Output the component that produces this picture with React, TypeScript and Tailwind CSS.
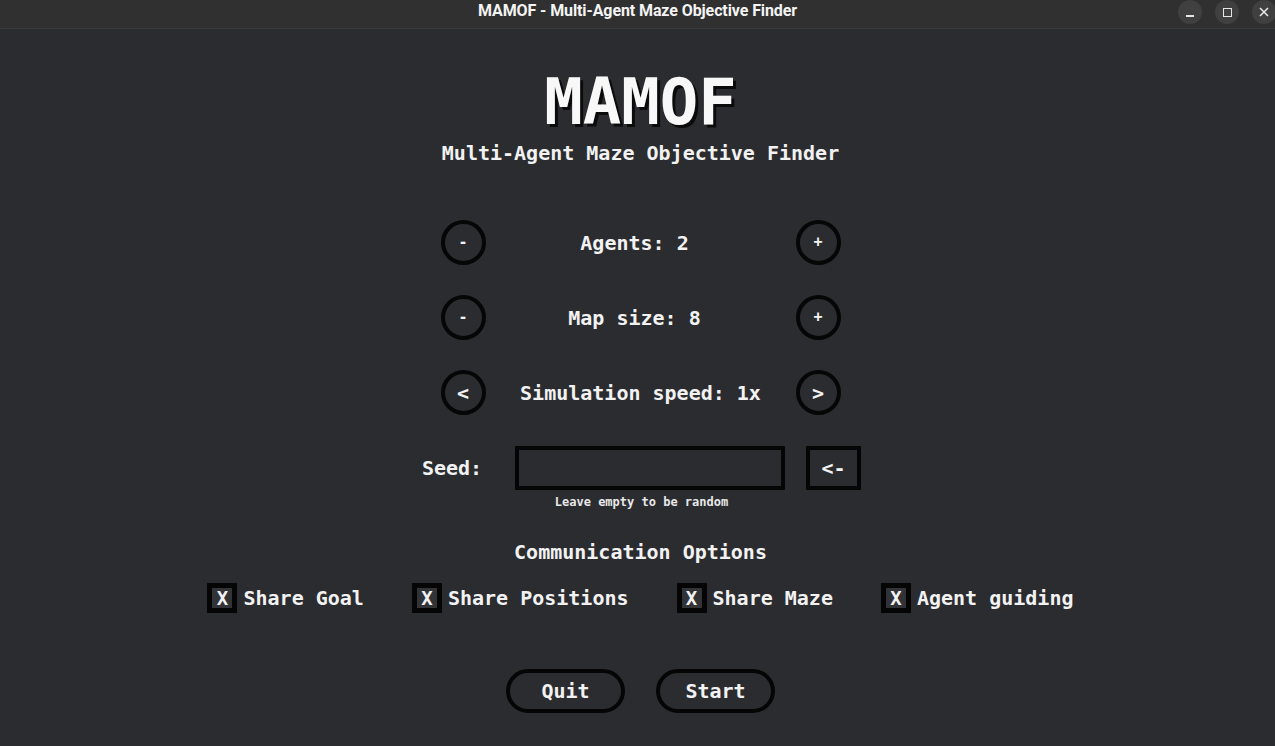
import React from "react";

const mono = { fontFamily: '"DejaVu Sans Mono", "Liberation Mono", monospace' } as const;

function Circle({ children, small }: { children: React.ReactNode; small?: boolean }) {
  return (
    <div
      className={`w-[45px] h-[45px] rounded-full border-[4px] border-[#060606] flex items-center justify-center font-bold text-[#f2f2f2] ${
        small ? "text-[15px]" : "text-[20px]"
      }`}
    >
      {children}
    </div>
  );
}

function Stepper({
  left,
  right,
  label,
  small,
  shift,
}: {
  left: string;
  right: string;
  label: string;
  small?: boolean;
  shift?: boolean;
}) {
  return (
    <div className="flex items-center w-[400px] h-[45px]">
      <Circle small={small}>{left}</Circle>
      <div
        className={`flex-1 text-center text-[20px] font-bold text-[#f2f2f2] leading-[28px] ${
          shift ? "pr-[12px]" : ""
        }`}
      >
        {label}
      </div>
      <Circle small={small}>{right}</Circle>
    </div>
  );
}

function Check({ label }: { label: string }) {
  return (
    <div className="flex items-center gap-[6px]">
      <div className="w-[30px] h-[30px] border-[5px] border-[#050505] bg-[#323337] flex items-center justify-center text-[19px] font-bold text-[#f2f2f2] leading-none">
        X
      </div>
      <span className="text-[20px] font-bold text-[#f2f2f2] leading-[28px]">{label}</span>
    </div>
  );
}

export default function App() {
  return (
    <div className="w-[1275px] h-[746px] bg-[#2b2c30] flex flex-col overflow-hidden">
      <div className="h-[29px] bg-[#303030] border-b border-[#3a3a3a] flex items-start relative shrink-0">
        <div
          className="flex-1 text-center text-[16px] leading-[22px] font-bold text-[#f4f4f4] tracking-[-0.1px]"
          style={{ fontFamily: '"Roboto", "Liberation Sans", sans-serif' }}
        >
          MAMOF - Multi-Agent Maze Objective Finder
        </div>
        <div className="absolute right-0 top-0 flex items-center gap-[13px] translate-x-[1px]">
          <div className="w-[24px] h-[24px] rounded-full bg-[#404040] flex items-end justify-center pb-[7px]">
            <div className="w-[8px] h-[2px] bg-[#e6e6e6]" />
          </div>
          <div className="w-[24px] h-[24px] rounded-full bg-[#404040] flex items-center justify-center">
            <div className="w-[9px] h-[9px] border-[1.5px] border-[#e6e6e6]" />
          </div>
          <div className="w-[24px] h-[24px] rounded-full bg-[#404040] flex items-center justify-center">
            <svg width="10" height="10" viewBox="0 0 10 10">
              <path d="M1 1 L9 9 M9 1 L1 9" stroke="#e6e6e6" strokeWidth="1.6" />
            </svg>
          </div>
        </div>
      </div>

      <div className="flex-1 flex flex-col items-center pl-[6px] pt-[41px]" style={mono}>
        <div className="h-[64px] leading-[64px] text-[64px] font-bold text-[#f8f8f8] [text-shadow:3px_3px_0_#0b0b0b]">
          MAMOF
        </div>
        <div className="mt-[5px] h-[28px] leading-[28px] text-[20px] font-bold text-[#f2f2f2]">
          Multi-Agent Maze Objective Finder
        </div>

        <div className="mt-[53px] flex flex-col gap-[30px]">
          <Stepper left="-" right="+" label="Agents: 2" small shift />
          <Stepper left="-" right="+" label="Map size: 8" small shift />
          <Stepper left="<" right=">" label="Simulation speed: 1x" />
        </div>

        <div className="mt-[31px] flex items-center h-[44px] translate-x-[1px]">
          <span className="text-[20px] font-bold text-[#f2f2f2] leading-[28px]">Seed:</span>
          <div className="ml-[33px] w-[270px] h-[44px] border-[4px] border-[#050505] bg-[#2b2c30]" />
          <div className="ml-[21px] w-[55px] h-[44px] border-[4px] border-[#050505] flex items-center justify-center text-[20px] font-bold text-[#f2f2f2]">
            &lt;-
          </div>
        </div>
        <div className="mt-[4px] h-[16px] leading-[16px] text-[12px] font-bold text-[#e8e8e8] translate-x-[1px]">
          Leave empty to be random
        </div>

        <div className="mt-[28px] h-[28px] leading-[28px] text-[20px] font-bold text-[#f2f2f2]">
          Communication Options
        </div>

        <div className="mt-[17px] flex items-center gap-[48px]">
          <Check label="Share Goal" />
          <Check label="Share Positions" />
          <Check label="Share Maze" />
          <Check label="Agent guiding" />
        </div>

        <div className="mt-[56px] flex items-center gap-[31px]">
          <div className="w-[119px] h-[44px] rounded-full border-[4px] border-[#050505] flex items-center justify-center text-[20px] font-bold text-[#f2f2f2]">
            Quit
          </div>
          <div className="w-[119px] h-[44px] rounded-full border-[4px] border-[#050505] flex items-center justify-center text-[20px] font-bold text-[#f2f2f2]">
            Start
          </div>
        </div>
      </div>
    </div>
  );
}
